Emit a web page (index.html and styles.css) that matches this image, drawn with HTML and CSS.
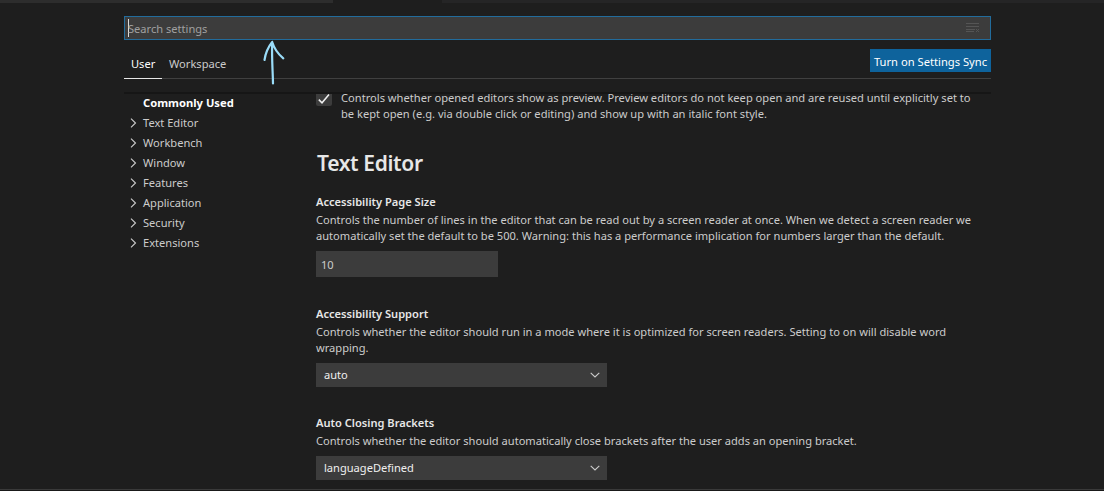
FILE: index.html
```html
<!DOCTYPE html>
<html lang="en">
<head>
    <meta charset="utf-8">
    <title>Settings</title>
    <link rel="stylesheet" href="styles.css">
</head>
<body>
<div class="tabstrip">
	<div class="tab"></div>
	<div class="tab active"></div>
	<div class="tab rest"></div>
</div>
<div class="settings">
	<div class="search">
		<span class="caret"></span>
		<span class="placeholder">Search settings</span>
		<svg class="clear" width="14" height="12" viewBox="0 0 14 12"><path d="M0 1.5h13M0 4.5h13M0 7.5h9M0 9.5h8M10 7l3 3M13 7l-3 3"/></svg>
	</div>
	<div class="header">
		<div class="scope user">User</div>
		<div class="scope">Workspace</div>
		<div class="sync">Turn on Settings Sync</div>
	</div>
	<div class="body">
		<ul class="toc">
			<li class="selected"><span>Commonly Used</span></li>
			<li><svg width="7" height="10" viewBox="0 0 7 10"><path d="M1 .7L5.5 5 1 9.3"/></svg><span>Text Editor</span></li>
			<li><svg width="7" height="10" viewBox="0 0 7 10"><path d="M1 .7L5.5 5 1 9.3"/></svg><span>Workbench</span></li>
			<li><svg width="7" height="10" viewBox="0 0 7 10"><path d="M1 .7L5.5 5 1 9.3"/></svg><span>Window</span></li>
			<li><svg width="7" height="10" viewBox="0 0 7 10"><path d="M1 .7L5.5 5 1 9.3"/></svg><span>Features</span></li>
			<li><svg width="7" height="10" viewBox="0 0 7 10"><path d="M1 .7L5.5 5 1 9.3"/></svg><span>Application</span></li>
			<li><svg width="7" height="10" viewBox="0 0 7 10"><path d="M1 .7L5.5 5 1 9.3"/></svg><span>Security</span></li>
			<li><svg width="7" height="10" viewBox="0 0 7 10"><path d="M1 .7L5.5 5 1 9.3"/></svg><span>Extensions</span></li>
		</ul>
		<div class="list">
			<div class="preview">
				<div class="checkbox"><svg width="16" height="12" viewBox="0 0 16 12"><path d="M2.8 5.6L6 8.8 13 .6"/></svg></div>
				<p>Controls whether opened editors show as preview. Preview editors do not keep open and are reused until explicitly set to<br>be kept open (e.g. via double click or editing) and show up with an italic font style.</p>
			</div>
			<h2>Text Editor</h2>
			<div class="item page-size">
				<h3>Accessibility Page Size</h3>
				<p>Controls the number of lines in the editor that can be read out by a screen reader at once. When we detect a screen reader we<br>automatically set the default to be 500. Warning: this has a performance implication for numbers larger than the default.</p>
				<div class="number">10</div>
			</div>
			<div class="item support">
				<h3>Accessibility Support</h3>
				<p>Controls whether the editor should run in a mode where it is optimized for screen readers. Setting to on will disable word<br>wrapping.</p>
				<div class="select"><span>auto</span><svg width="10" height="6" viewBox="0 0 10 6"><path d="M.7 .8L5 5 9.3 .8"/></svg></div>
			</div>
			<div class="item">
				<h3>Auto Closing Brackets</h3>
				<p>Controls whether the editor should automatically close brackets after the user adds an opening bracket.</p>
				<div class="select"><span>languageDefined</span><svg width="10" height="6" viewBox="0 0 10 6"><path d="M.7 .8L5 5 9.3 .8"/></svg></div>
			</div>
		</div>
	</div>
</div>
<div class="panel-edge"></div>
<svg class="arrow" width="24" height="48" viewBox="0 0 24 48"><path d="M12 45.5C11.8 33 10.6 20 11.2 4M3.5 22C4.5 15 8 8 11.2 4M11.2 4C13 10 17 16 22.3 20.3"/></svg>
</body>
</html>
```

FILE: styles.css
```css
* {
	box-sizing: border-box;
	margin: 0;
	padding: 0;
}

body {
	position: relative;
	display: flex;
	flex-direction: column;
	width: 1104px;
	height: 491px;
	overflow: hidden;
	background: #1e1e1e;
	color: #ccc;
	font-family: "Noto Sans", "Open Sans", sans-serif;
	font-size: 11.1px;
	line-height: 16px;
	white-space: nowrap;
}

svg {
	fill: none;
	stroke: #ccc;
	stroke-width: 1.1;
	flex: none;
}

.tabstrip {
	display: flex;
	height: 3px;
	flex: none;
}

.tab {
	width: 333px;
	background: #2d2d2d;
}

.tab.active {
	width: 109px;
	background: #1e1e1e;
}

.tab.rest {
	flex: 1;
	background: #252526;
}

.settings {
	width: 867px;
	margin-left: 124px;
	padding-top: 13px;
	flex: 1;
	min-height: 0;
	overflow: hidden;
}

.search {
	display: flex;
	align-items: center;
	height: 24px;
	padding: 0 10px 0 3px;
	border: 1px solid #226c9c;
	background: #3c3c3c;
	color: #a0a0a0;
}

.caret {
	width: 1px;
	height: 18px;
	margin-right: -1px;
	background: #ddd;
}

.placeholder {
	flex: 1;
	padding-top: 1px;
}

.clear {
	stroke: #555;
	stroke-width: 1;
}

.header {
	display: flex;
	height: 39px;
	padding-top: 9px;
	border-bottom: 1px solid #404040;
}

.scope {
	height: 30px;
	padding: 7px 7px 0;
}

.scope.user {
	width: 38px;
	color: #fff;
	border-bottom: 1px solid #e7e7e7;
}

.sync {
	width: 121px;
	height: 23px;
	margin-left: auto;
	background: #0e639c;
	color: #fff;
	font-size: 11.2px;
	line-height: 25px;
	text-align: center;
}

.body {
	display: flex;
	height: 398px;
	margin-top: 13px;
	border-top: 2px solid #161616;
}

.toc {
	width: 192px;
	margin-top: -1px;
	list-style: none;
}

.toc li {
	display: flex;
	align-items: center;
	height: 20px;
	padding-left: 6px;
}

.toc svg {
	margin-right: 6px;
}

.toc .selected {
	padding-left: 19px;
	color: #fff;
	font-size: 11.2px;
	font-weight: 700;
}

.preview {
	display: flex;
	height: 50px;
}

.preview p {
	margin-top: -4px;
	font-size: 11.14px;
}

.checkbox {
	width: 16px;
	height: 12px;
	margin-right: 9px;
	border-radius: 0 0 2px 2px;
	background: #3c3c3c;
}

.checkbox svg {
	display: block;
	stroke: #f0f0f0;
	stroke-width: 1.5;
}

h2 {
	height: 50px;
	padding-left: 1px;
	color: #e7e7e7;
	font-size: 21px;
	font-weight: 600;
	letter-spacing: -.35px;
	line-height: 38px;
}

h3 {
	height: 18px;
	color: #e7e7e7;
	font-size: 11.1px;
	font-weight: 600;
	line-height: 16px;
}

.page-size {
	height: 112px;
}

.support {
	height: 109px;
}

.number {
	width: 182px;
	height: 26px;
	margin-top: 7px;
	padding-left: 5px;
	background: #3c3c3c;
	line-height: 28px;
}

.select {
	display: flex;
	align-items: center;
	width: 291px;
	height: 24px;
	margin-top: 7px;
	padding: 0 7px 0 8px;
	background: #3c3c3c;
	color: #f0f0f0;
}

.select span {
	flex: 1;
}

.panel-edge {
	height: 2px;
	flex: none;
	background: #3a3a3a;
	border-bottom: 1px solid #191919;
}

/* hand drawn pointer over the search box */
.arrow {
	position: absolute;
	left: 261px;
	top: 38px;
	stroke: #9adcf8;
	stroke-width: 2.2;
	stroke-linecap: round;
}
```
